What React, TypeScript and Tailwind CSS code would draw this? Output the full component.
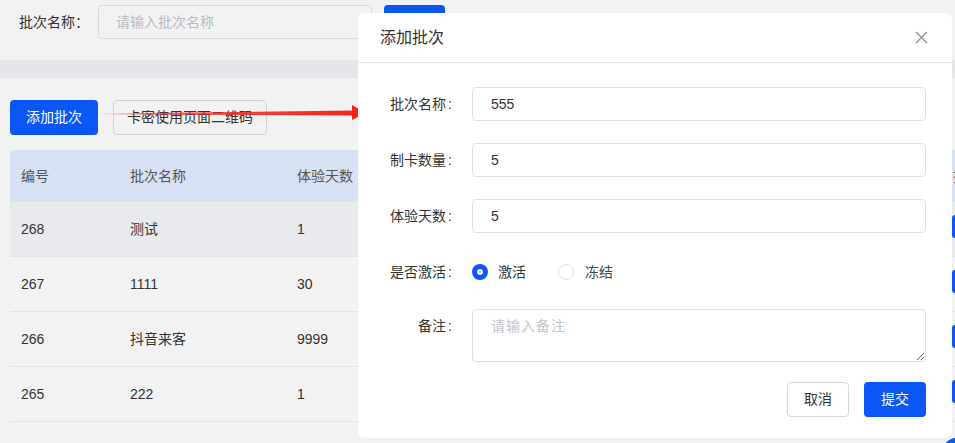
import React from 'react';

const font = { fontFamily: '"Liberation Sans", "Noto Sans CJK SC", sans-serif' };

const rows = [
  { id: '268', name: '测试', days: '1', count: '5', status: '激活', remark: '' },
  { id: '267', name: '1111', days: '30', count: '10', status: '激活', remark: '' },
  { id: '266', name: '抖音来客', days: '9999', count: '100', status: '激活', remark: '' },
  { id: '265', name: '222', days: '1', count: '2', status: '冻结', remark: '' },
];

const FormItem: React.FC<{ label: string; top?: boolean; children: React.ReactNode }> = ({ label, top, children }) => (
  <div className={`flex ${top ? 'items-start' : 'items-center'}`}>
    <label className={`w-[114px] shrink-0 pr-[20px] text-right text-[14px] text-[#333] ${top ? 'pt-[7px] leading-[20px]' : ''}`}>
      {label}<span className="ml-[2px]">:</span>
    </label>
    <div className="flex-1">{children}</div>
  </div>
);

const App: React.FC = () => {
  return (
    <div className="relative w-[955px] h-[443px] overflow-hidden bg-[#f2f2f2]" style={font}>
      {/* Search bar */}
      <div className="h-[60px] flex items-start pt-[5px] pl-[19px]">
        <span className="text-[14px] text-[#333] leading-[34px] w-[79px]">批次名称：</span>
        <div className="w-[274px] h-[34px] border border-[#d9dbe0] rounded-[4px] pl-[17px] flex items-center text-[14px] text-[#b8bbc2]">
          请输入批次名称
        </div>
        <button className="ml-[12px] w-[61px] h-[34px] bg-[#0a57f6] rounded-[4px] text-white text-[14px]">查询</button>
      </div>

      <div className="h-[18px] bg-[#e5e6e9]" />

      {/* Toolbar */}
      <div className="flex items-center gap-[15px] pl-[10px] pt-[22px]">
        <button className="w-[88px] h-[35px] bg-[#0a57f6] rounded-[4px] text-white text-[14px]">添加批次</button>
        <button className="w-[154px] h-[35px] border border-[#d0d3d9] rounded-[4px] text-[#333] text-[14px]">卡密使用页面二维码</button>
      </div>

      {/* Table */}
      <div className="mt-[15px] ml-[10px] w-[1100px] text-[14px] text-[#333]">
        <div className="flex h-[52px] items-center bg-[#d8e1f3] rounded-tl-[4px] text-[#555]">
          <div className="w-[109px] pl-[11px]">编号</div>
          <div className="w-[167px] pl-[11px]">批次名称</div>
          <div className="w-[160px] pl-[11px]">体验天数</div>
          <div className="w-[170px] pl-[11px]">制卡数量</div>
          <div className="w-[170px] pl-[11px]">状态</div>
          <div className="w-[156px] pl-[11px]">备注</div>
          <div className="pl-[11px]">操作</div>
        </div>
        {rows.map((r, i) => (
          <div
            key={r.id}
            className={`flex h-[55px] items-center border-b border-[#e3e3e3] ${i === 0 ? 'bg-[#e9eaed]' : ''}`}
          >
            <div className="w-[109px] pl-[11px]">{r.id}</div>
            <div className="w-[167px] pl-[11px]">{r.name}</div>
            <div className="w-[160px] pl-[11px]">{r.days}</div>
            <div className="w-[170px] pl-[11px]">{r.count}</div>
            <div className="w-[170px] pl-[11px]">{r.status}</div>
            <div className="w-[156px] pl-[11px]">{r.remark}</div>
            <div className="pl-[10px]">
              <button className="w-[60px] h-[23px] bg-[#0a57f6] rounded-[3px] text-white text-[12px]" aria-label="编辑" />
            </div>
          </div>
        ))}
      </div>

      {/* floating button, bottom right */}
      <div className="absolute left-[940px] top-[437px] w-[40px] h-[40px] rounded-full bg-[#0a57f6]" />

      {/* Annotation arrow */}
      <svg className="absolute left-[96px] top-[100px] pointer-events-none" width="272" height="30" viewBox="0 0 272 30">
        <defs>
          <linearGradient id="arrowFade" x1="0" y1="0" x2="1" y2="0">
            <stop offset="0" stopColor="#f5231b" stopOpacity="0" />
            <stop offset="0.25" stopColor="#f5231b" stopOpacity="0.75" />
            <stop offset="1" stopColor="#f5231b" />
          </linearGradient>
        </defs>
        <polygon points="0,13.5 258,10.5 258,15.5 0,14.5" fill="url(#arrowFade)" />
        <polygon points="256,5 270,13 256,20" fill="#f5231b" />
      </svg>

      {/* Dialog */}
      <div className="absolute left-[358px] top-[13px] w-[594px] h-[425px] bg-white rounded-[6px] flex flex-col">
        <div className="h-[50px] border-b border-[#e8e8eb] flex items-center justify-between pl-[22px] pr-[24px]">
          <span className="text-[16px] text-[#333]">添加批次</span>
          <svg width="13" height="13" viewBox="0 0 13 13" className="text-[#8c8f96]">
            <path d="M1 1 L12 12 M12 1 L1 12" stroke="currentColor" strokeWidth="1.3" />
          </svg>
        </div>

        <div className="flex flex-col pt-[24px] pr-[26px]">
          <FormItem label="批次名称">
            <input
              readOnly
              value="555"
              className="w-full h-[34px] border border-[#dcdfe6] rounded-[4px] pl-[18px] text-[14px] text-[#333] outline-none"
            />
          </FormItem>
          <div className="h-[22px]" />
          <FormItem label="制卡数量">
            <input
              readOnly
              value="5"
              className="w-full h-[34px] border border-[#dcdfe6] rounded-[4px] pl-[18px] text-[14px] text-[#333] outline-none"
            />
          </FormItem>
          <div className="h-[22px]" />
          <FormItem label="体验天数">
            <input
              readOnly
              value="5"
              className="w-full h-[34px] border border-[#dcdfe6] rounded-[4px] pl-[18px] text-[14px] text-[#333] outline-none"
            />
          </FormItem>
          <div className="h-[22px]" />
          <FormItem label="是否激活">
            <div className="h-[34px] flex items-center text-[14px] text-[#333]">
              <span className="w-[16px] h-[16px] rounded-full bg-[#0a57f6] flex items-center justify-center">
                <span className="w-[6px] h-[6px] rounded-full bg-white" />
              </span>
              <span className="ml-[10px]">激活</span>
              <span className="ml-[32px] w-[16px] h-[16px] rounded-full border border-[#dcdfe6]" />
              <span className="ml-[11px] text-[#444]">冻结</span>
            </div>
          </FormItem>
          <div className="h-[20px]" />
          <FormItem label="备注" top>
            <textarea
              readOnly
              placeholder="请输入备注"
              className="block w-full h-[53px] border border-[#dcdfe6] rounded-[4px] pl-[18px] pt-[6px] text-[14px] tracking-[1px] text-[#333] placeholder:text-[#c0c4cc] outline-none resize-y"
            />
          </FormItem>
          <div className="flex justify-end gap-[15px] mt-[20px]">
            <button className="w-[62px] h-[35px] border border-[#d6d8de] rounded-[4px] text-[14px] text-[#333]">取消</button>
            <button className="w-[62px] h-[35px] bg-[#0a57f6] rounded-[4px] text-[14px] text-white">提交</button>
          </div>
        </div>
      </div>
    </div>
  );
};

export default App;
